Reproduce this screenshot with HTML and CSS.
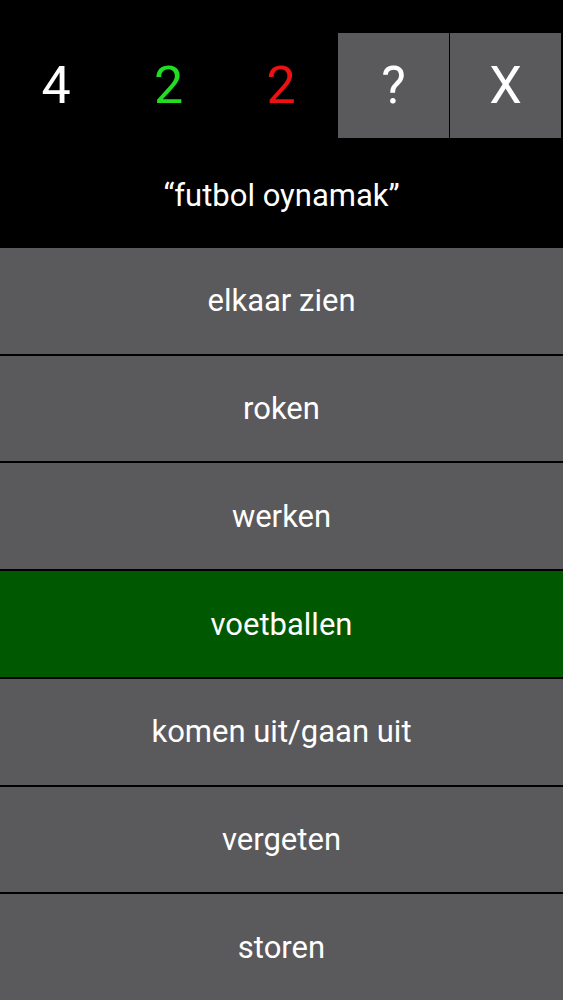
FILE: index.html
```html
<!DOCTYPE html>
<html>
<head>
<meta charset="utf-8">
<link rel="stylesheet" href="styles.css">
</head>
<body>
<div class="app">
  <div class="top">
    <div class="cell score white">4</div>
    <div class="cell score green">2</div>
    <div class="cell score red">2</div>
    <div class="cell btn">?</div>
    <div class="cell btn">X</div>
  </div>
  <div class="prompt">“futbol oynamak”</div>
  <div class="options">
    <div class="opt">elkaar zien</div>
    <div class="opt">roken</div>
    <div class="opt">werken</div>
    <div class="opt correct">voetballen</div>
    <div class="opt">komen uit/gaan uit</div>
    <div class="opt">vergeten</div>
    <div class="opt">storen</div>
  </div>
</div>
</body>
</html>
```
FILE: styles.css
```css
html, body {
  margin: 0;
  padding: 0;
  background: #000;
}
.app {
  width: 563px;
  height: 1000px;
  display: flex;
  flex-direction: column;
  font-family: Roboto, "Noto Sans", sans-serif;
  color: #fff;
  padding-top: 33px;
  box-sizing: border-box;
}
.top {
  height: 105px;
  display: grid;
  grid-template-columns: 112px 113px 112px 112px 112px;
  column-gap: 0;
}
.cell {
  display: flex;
  align-items: center;
  justify-content: center;
  font-size: 52px;
}
.btn {
  background: #5a595b;
  margin-left: 1px;
}
.white { color: #fff; }
.green { color: #22dd22; }
.red { color: #ee1111; }
.prompt {
  height: 110px;
  box-sizing: border-box;
  padding-top: 4px;
  display: flex;
  align-items: center;
  justify-content: center;
  font-size: 31px;
}
.options {
  flex: 1;
  display: flex;
  flex-direction: column;
  gap: 2px;
}
.opt {
  flex: 1;
  background: #5a595b;
  display: flex;
  align-items: center;
  justify-content: center;
  font-size: 31px;
}
.correct {
  background: #005800;
}
```
